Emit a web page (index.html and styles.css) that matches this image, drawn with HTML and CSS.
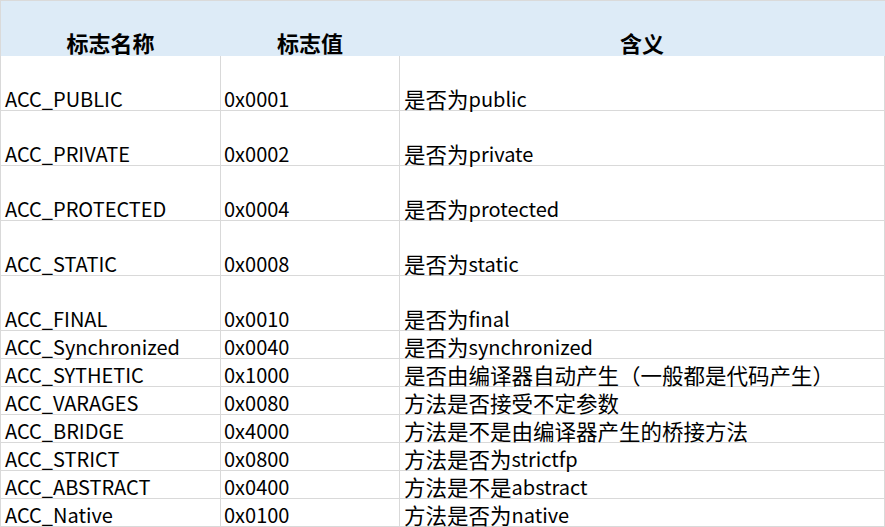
FILE: index.html
```html
<!DOCTYPE html>
<html lang="zh-CN">
<head>
<meta charset="utf-8">
<title>访问标志</title>
<link rel="stylesheet" href="styles.css">
</head>
<body>
<div class="sheet">
  <div class="cell head c1">标志名称</div>
  <div class="cell head c2">标志值</div>
  <div class="cell head c3">含义</div>

  <div class="cell tall c1">ACC_PUBLIC</div>
  <div class="cell tall c2">0x0001</div>
  <div class="cell tall c3">是否为<span class="lat">public</span></div>

  <div class="cell tall c1">ACC_PRIVATE</div>
  <div class="cell tall c2">0x0002</div>
  <div class="cell tall c3">是否为<span class="lat">private</span></div>

  <div class="cell tall c1">ACC_PROTECTED</div>
  <div class="cell tall c2">0x0004</div>
  <div class="cell tall c3">是否为<span class="lat">protected</span></div>

  <div class="cell tall c1">ACC_STATIC</div>
  <div class="cell tall c2">0x0008</div>
  <div class="cell tall c3">是否为<span class="lat">static</span></div>

  <div class="cell tall c1">ACC_FINAL</div>
  <div class="cell tall c2">0x0010</div>
  <div class="cell tall c3">是否为<span class="lat">final</span></div>

  <div class="cell c1">ACC_Synchronized</div>
  <div class="cell c2">0x0040</div>
  <div class="cell c3">是否为<span class="lat">synchronized</span></div>

  <div class="cell c1">ACC_SYTHETIC</div>
  <div class="cell c2">0x1000</div>
  <div class="cell c3">是否由编译器自动产生（一般都是代码产生）</div>

  <div class="cell c1">ACC_VARAGES</div>
  <div class="cell c2">0x0080</div>
  <div class="cell c3">方法是否接受不定参数</div>

  <div class="cell c1">ACC_BRIDGE</div>
  <div class="cell c2">0x4000</div>
  <div class="cell c3">方法是不是由编译器产生的桥接方法</div>

  <div class="cell c1">ACC_STRICT</div>
  <div class="cell c2">0x0800</div>
  <div class="cell c3">方法是否为<span class="lat">strictfp</span></div>

  <div class="cell c1">ACC_ABSTRACT</div>
  <div class="cell c2">0x0400</div>
  <div class="cell c3">方法是不是<span class="lat">abstract</span></div>

  <div class="cell c1">ACC_Native</div>
  <div class="cell c2">0x0100</div>
  <div class="cell c3">方法是否为<span class="lat">native</span></div>
</div>
</body>
</html>
```
FILE: styles.css
```css
html, body {
  margin: 0;
  padding: 0;
  background: #ffffff;
}

.sheet {
  display: grid;
  grid-template-columns: 221px 179px 485px;
  width: 885px;
  border-top: 1px solid #dadada;
  box-sizing: border-box;
  font-family: "Noto Sans CJK SC", "Noto Sans", sans-serif;
  font-size: 21.5px;
  line-height: 22px;
  color: #000000;
}

.cell {
  box-sizing: border-box;
  display: flex;
  align-items: flex-end;
  height: 28px;
  padding-left: 4px;
  border-right: 1px solid #d9d9d9;
  border-bottom: 1px solid #d9d9d9;
  white-space: nowrap;
}

.c1 {
  border-left: 1px solid #d9d9d9;
  font-size: 20px;
}

.c2 {
  padding-left: 3px;
  font-size: 20px;
}

.c3 {
  padding-left: 4px;
}

.lat {
  font-size: 20px;
}

.tall {
  height: 55px;
}

.head {
  height: 55px;
  justify-content: center;
  padding: 0 0 3px 0;
  background: #ddebf7;
  border-right-color: #ddebf7;
  border-bottom: none;
  font-size: 22px;
  font-weight: 700;
}

.head.c1 {
  border-left-color: #dadada;
}
```
